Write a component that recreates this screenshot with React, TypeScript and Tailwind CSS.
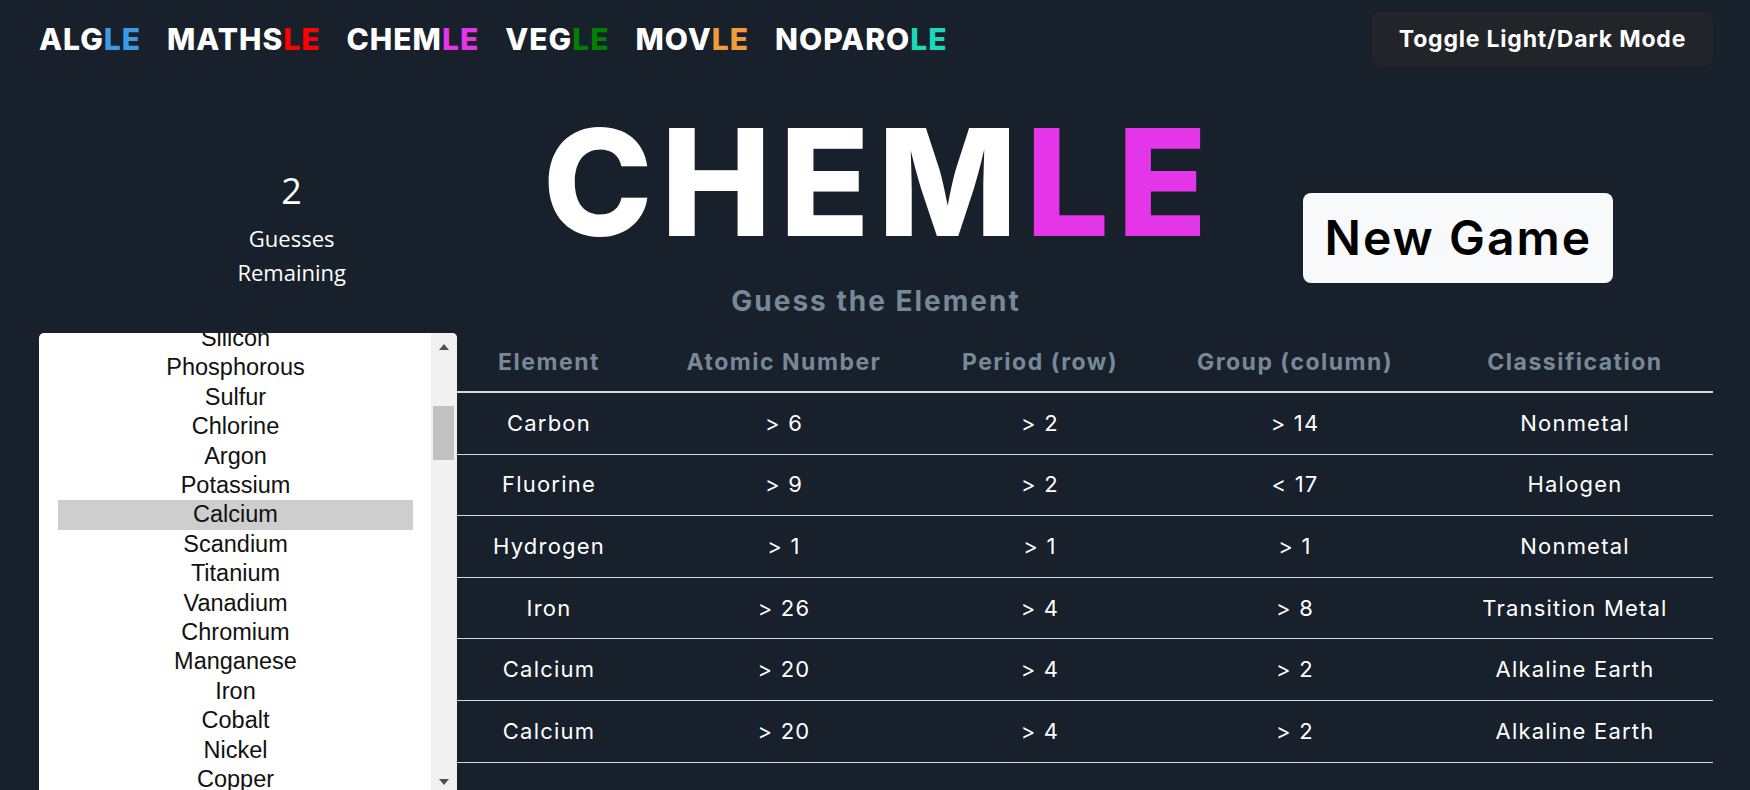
import React from 'react'

const games = [
  { base: 'ALG', color: 'text-[#3b9be9]' },
  { base: 'MATHS', color: 'text-[#ff0000]' },
  { base: 'CHEM', color: 'text-[#e535e9]' },
  { base: 'VEG', color: 'text-[#008000]' },
  { base: 'MOV', color: 'text-[#f09c3c]' },
  { base: 'NOPARO', color: 'text-[#1ad9b8]' },
]

const options = [
  'Silicon',
  'Phosphorous',
  'Sulfur',
  'Chlorine',
  'Argon',
  'Potassium',
  'Calcium',
  'Scandium',
  'Titanium',
  'Vanadium',
  'Chromium',
  'Manganese',
  'Iron',
  'Cobalt',
  'Nickel',
  'Copper',
  'Zinc',
]

const headers = ['Element', 'Atomic Number', 'Period (row)', 'Group (column)', 'Classification']

const guesses = [
  ['Carbon', '> 6', '> 2', '> 14', 'Nonmetal'],
  ['Fluorine', '> 9', '> 2', '< 17', 'Halogen'],
  ['Hydrogen', '> 1', '> 1', '> 1', 'Nonmetal'],
  ['Iron', '> 26', '> 4', '> 8', 'Transition Metal'],
  ['Calcium', '> 20', '> 4', '> 2', 'Alkaline Earth'],
  ['Calcium', '> 20', '> 4', '> 2', 'Alkaline Earth'],
]

function Listbox() {
  return (
    <div className="flex h-[480px] w-[418px] shrink-0 overflow-hidden rounded-t-[5px] bg-white">
      <div className="flex-1 overflow-hidden">
        <div className="-mt-[9px] pl-[19px] pr-[18px] font-['Liberation_Sans',Arial,sans-serif] text-[23.5px] text-[#111]">
          {options.map((o) => (
            <div
              key={o}
              className={`flex h-[29.4px] items-center justify-center ${o === 'Calcium' ? 'bg-[#cecece]' : ''}`}
            >
              {o}
            </div>
          ))}
        </div>
      </div>
      <div className="relative w-[26px] bg-[#f1f1f1]">
        <div className="absolute left-[8px] top-[11px] h-0 w-0 border-x-[5px] border-b-[6px] border-x-transparent border-b-[#505050]" />
        <div className="absolute left-[2px] top-[73px] h-[54px] w-[21px] bg-[#c1c1c1]" />
        <div className="absolute left-[8px] top-[446px] h-0 w-0 border-x-[5px] border-t-[6px] border-x-transparent border-t-[#505050]" />
      </div>
    </div>
  )
}

export default function App() {
  return (
    <div className="h-[790px] overflow-hidden bg-[#18202b] font-['Inter',sans-serif] text-white">
      <nav className="flex items-center justify-between pl-[39px] pr-[37px] pt-[12px]">
        <div className="flex gap-[26px]">
          {games.map((g) => (
            <span key={g.base} className="text-[30px] font-extrabold leading-none tracking-[1px]">
              {g.base}
              <span className={g.color}>LE</span>
            </span>
          ))}
        </div>
        <button className="h-[54px] w-[341px] rounded-[8px] bg-[#212429] text-[23px] font-bold tracking-[0.8px] text-white">
          Toggle Light/Dark Mode
        </button>
      </nav>

      <div className="mt-[43px] grid grid-cols-3">
        <div className="flex flex-col items-center pt-[60px] font-['Open_Sans',sans-serif]">
          <div className="text-[36px] leading-[44px]">2</div>
          <div className="mt-[8px] text-[22px] leading-[34px]">Guesses</div>
          <div className="text-[22px] leading-[34px]">Remaining</div>
        </div>
        <div className="flex flex-col items-center">
          <h1 className="pl-[8px] text-[148px] font-extrabold leading-none tracking-[8px]">
            CHEM<span className="text-[#e535e9]">LE</span>
          </h1>
          <p className="mt-[28px] pl-[2px] text-[28px] font-bold leading-[32px] tracking-[2px] text-[#778899]">
            Guess the Element
          </p>
        </div>
        <div className="flex justify-center pt-[84px]">
          <button className="h-[90px] w-[310px] rounded-[8px] bg-[#f8f9fa] text-[48px] font-semibold tracking-[2px] text-black">
            New Game
          </button>
        </div>
      </div>

      <div className="mt-[16px] flex pl-[39px] pr-[37px]">
        <Listbox />
        <div className="flex-1">
          <div className="grid h-[60px] grid-cols-[184px_286px_226px_284px_1fr] items-center border-b-2 border-[#d5d9dd] text-[23px] font-bold tracking-[1.5px] text-[#778899]">
            {headers.map((h) => (
              <div key={h} className="text-center">
                {h}
              </div>
            ))}
          </div>
          {guesses.map((row, i) => (
            <div
              key={i}
              className="grid h-[61.6px] grid-cols-[184px_286px_226px_284px_1fr] items-center border-b border-[#d5d9dd] text-[22px] tracking-[1.2px]"
            >
              {row.map((c, j) => (
                <div key={j} className="text-center">
                  {c}
                </div>
              ))}
            </div>
          ))}
        </div>
      </div>
    </div>
  )
}
